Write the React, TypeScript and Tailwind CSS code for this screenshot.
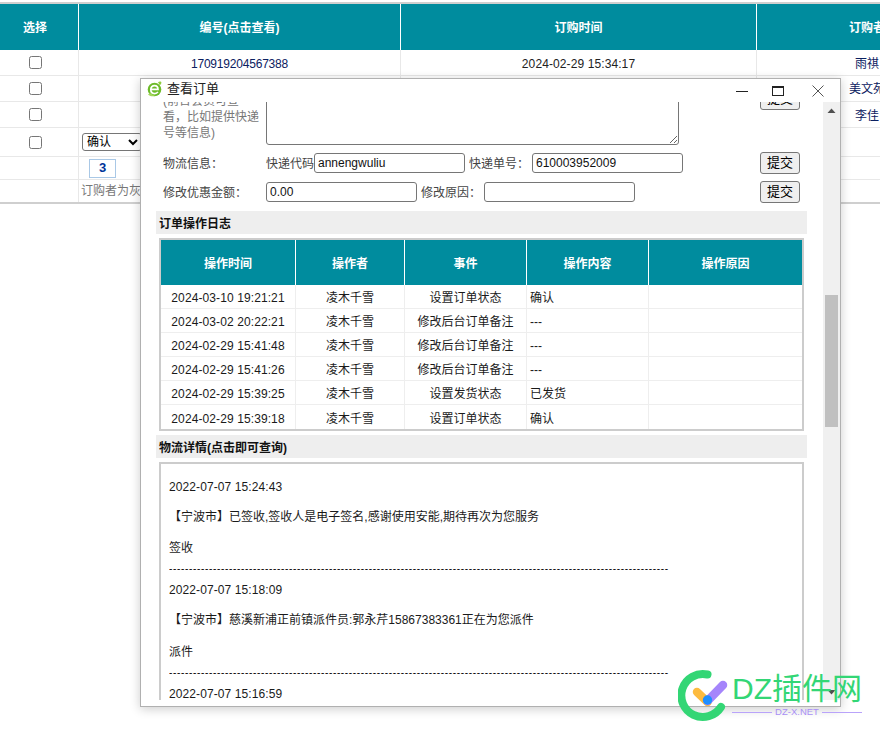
const logRows = [
  ["2024-03-10 19:21:21", "设置订单状态", "确认"],
  ["2024-03-02 20:22:21", "修改后台订单备注", "---"],
  ["2024-02-29 15:41:48", "修改后台订单备注", "---"],
  ["2024-02-29 15:41:26", "修改后台订单备注", "---"],
  ["2024-02-29 15:39:25", "设置发货状态", "已发货"],
  ["2024-02-29 15:39:18", "设置订单状态", "确认"],
];

const dashes = "-".repeat(125);

const trackLines = [
  ["2022-07-07 15:24:43", "mt-0", "tracking-[0.1px]"],
  ["【宁波市】已签收,签收人是电子签名,感谢使用安能,期待再次为您服务", "mt-[10px]", ""],
  ["签收", "mt-[11px]", ""],
  [dashes, "mt-px", "text-[10px] tracking-[0.667px] text-black"],
  ["2022-07-07 15:18:09", "mt-px", "tracking-[0.1px]"],
  ["【宁波市】慈溪新浦正前镇派件员:郭永芹15867383361正在为您派件", "mt-[10px]", ""],
  ["派件", "mt-3", ""],
  [dashes, "mt-px", "text-[10px] tracking-[0.667px] text-black"],
  ["2022-07-07 15:16:59", "mt-px", "tracking-[0.1px]"],
];

function Btn() {
  return (
    <button className="h-[22px] w-10 shrink-0 rounded-[3px] border border-[#767676] bg-[#efefef] text-[13px] leading-5 text-black">
      提交
    </button>
  );
}

function Field({ value, w = "w-[151px]" }: { value?: string; w?: string }) {
  return (
    <input
      readOnly
      value={value ?? ""}
      className={`${w} h-5 shrink-0 rounded-[3px] border border-[#767676] bg-white px-[3px] text-[12px] text-[#111]`}
    />
  );
}

function BgRow({ h, cols, sep = "border-b border-[#e8e8e8]" }: { h: string; cols: React.ReactNode[]; sep?: string }) {
  return (
    <div className={`grid grid-cols-[87px_322px_356px_221px] ${h} ${sep}`}>
      {cols.map((c, i) => (
        <div key={i} className="flex items-center justify-center border-r border-[#e8e8e8]">
          {c}
        </div>
      ))}
    </div>
  );
}

function SectionBar({ children }: { children: React.ReactNode }) {
  return (
    <div className="flex h-[23px] w-[651px] items-center bg-[#eeeeee] pl-[3px] pt-[2px] text-[12px] font-bold text-[#111]">
      {children}
    </div>
  );
}

export default function App() {
  return (
    <div className="relative h-[736px] w-[880px] overflow-hidden bg-white font-['Liberation_Sans','Noto_Sans_CJK_SC',sans-serif] text-[12px] text-[#222]">
      {/* background table */}
      <div className="-ml-2 w-[986px] pt-[2px]">
        <div className="border-t-2 border-[#d0d0d0]" />
        <div className="grid h-[46px] grid-cols-[87px_322px_356px_221px] bg-[#008c9e] font-bold text-white">
          {["选择", "编号(点击查看)", "订购时间", "订购者"].map((t) => (
            <div key={t} className="flex items-center justify-center border-r border-white pt-px">
              {t}
            </div>
          ))}
        </div>
        <BgRow
          h="h-[26px]"
          cols={[
            <input type="checkbox" />,
            <span className="mt-[2px] tracking-[-0.2px] text-[#0b2060]">170919204567388</span>,
            <span className="mt-[2px] tracking-[0.1px]">2024-02-29 15:34:17</span>,
            <span className="mt-[2px] text-[#0b2060]">雨祺</span>,
          ]}
        />
        <BgRow
          h="h-[26px]"
          cols={[<input type="checkbox" />, null, null, <span className="text-[#0b2060]">美文苑</span>]}
        />
        <BgRow
          h="h-[26px]"
          cols={[<input type="checkbox" />, null, null, <span className="mt-[2px] text-[#0b2060]">李佳</span>]}
        />
        <div className="grid h-[29px] grid-cols-[87px_899px] border-b border-[#e8e8e8]">
          <div className="flex items-center justify-center border-r border-[#e8e8e8]">
            <input type="checkbox" />
          </div>
          <div className="flex items-center pl-[3px]">
            <select className="h-[18px] w-[60px] rounded-[3px] border border-[#767676] bg-white text-[12px] text-black">
              <option>确认</option>
            </select>
          </div>
        </div>
        <div className="grid h-[23px] grid-cols-[87px_899px] border-b border-[#e8e8e8]">
          <div className="border-r border-[#e8e8e8]" />
          <div className="flex items-center pl-[10px]">
            <span className="flex h-[19px] w-[27px] items-center justify-center border border-[#a9c8e6] text-[13px] font-bold text-[#003399]">
              3
            </span>
          </div>
        </div>
        <div className="grid h-6 grid-cols-[87px_899px] border-b-2 border-[#cfcfcf]">
          <div className="border-r border-[#e8e8e8]" />
          <div className="flex items-center pl-[2px] text-[#777]">订购者为灰色表示未登录用户</div>
        </div>
      </div>

      {/* dialog */}
      <div className="absolute left-[140px] top-[78px] h-[629px] w-[701px] border border-[#b0b0b0] bg-white shadow-[0_2px_10px_rgba(0,0,0,0.2)]">
        <div className="flex h-[23px] items-center pl-[6px]">
          <div className="mb-1 flex items-center">
            <svg width="15" height="16" viewBox="0 0 15 16" className="shrink-0">
              <circle cx="7.5" cy="8.5" r="6.8" fill="#6dbb2a" />
              <path d="M1 13.5 C3 15.5 6 15.5 8 15 L3 12 Z" fill="#a4d85a" />
              <path d="M11 1.2 C12.5 0.2 14.2 0.4 14.4 1.4 C14.5 2.4 13.6 3.6 12.8 4.3 Z" fill="#8fce3f" />
              <path
                d="M3.8 8.4 H11 C11 5.9 9.5 4.6 7.5 4.6 C5.4 4.6 3.8 6.2 3.8 8.6 C3.8 11 5.4 12.6 7.6 12.6 C9 12.6 10.2 12 10.9 10.9"
                fill="none"
                stroke="#fff"
                strokeWidth="1.7"
              />
            </svg>
            <span className="ml-[5px] text-[13px] text-[#222]">查看订单</span>
          </div>
          <div className="ml-auto flex items-center">
            <svg width="14" height="14" viewBox="0 0 14 14" className="mr-[22px]">
              <path d="M1 7.5 H13" stroke="#222" strokeWidth="1" />
            </svg>
            <svg width="14" height="14" viewBox="0 0 14 14" className="mr-[26px]">
              <rect x="1.5" y="2.5" width="11" height="9" fill="none" stroke="#222" strokeWidth="1" />
              <path d="M1 3 H13" stroke="#222" strokeWidth="2" />
            </svg>
            <svg width="14" height="14" viewBox="0 0 14 14" className="mr-[15px]">
              <path d="M1.5 1.5 L12.5 12.5 M12.5 1.5 L1.5 12.5" stroke="#555" strokeWidth="1" />
            </svg>
          </div>
        </div>

        <div className="flex h-[598px]">
          {/* scrolled content */}
          <div className="h-full w-[682px] overflow-hidden pl-[15px]">
            <div className="-mt-[22px]">
              {/* remark row */}
              <div className="flex h-[65px] items-start pl-[7px]">
                <div className="w-[103px] pt-[13px] leading-4 text-[#777]">
                  <div>(前台会员可查</div>
                  <div>看，比如提供快递</div>
                  <div>号等信息)</div>
                </div>
                <textarea readOnly className="h-[65px] w-[413px] shrink-0 rounded-[3px] border border-[#767676] bg-white" />
                <div className="ml-[81px] mt-2">
                  <Btn />
                </div>
              </div>
              {/* logistics */}
              <div className="mt-[7px] flex h-[22px] items-center pl-[7px]">
                <span className="w-[103px] pt-[2px] text-[#444]">物流信息：</span>
                <span className="w-12 whitespace-nowrap pt-[2px] text-[#444]">快递代码</span>
                <Field value="annengwuliu" />
                <span className="ml-1 w-[63px] whitespace-nowrap pt-[2px] text-[#444]">快递单号：</span>
                <Field value="610003952009" />
                <div className="ml-[77px]">
                  <Btn />
                </div>
              </div>
              {/* discount */}
              <div className="mt-[7px] flex h-[22px] items-center pl-[7px]">
                <span className="w-[103px] pt-[2px] text-[#444]">修改优惠金额：</span>
                <Field value="0.00" />
                <span className="ml-1 w-[63px] whitespace-nowrap pt-[2px] text-[#444]">修改原因：</span>
                <Field />
                <div className="ml-[125px]">
                  <Btn />
                </div>
              </div>

              <div className="mt-2">
                <SectionBar>订单操作日志</SectionBar>
              </div>

              {/* log table */}
              <div className="ml-[3px] mt-1 w-[645px] border-2 border-[#cccccc]">
                <div className="grid h-[45px] grid-cols-[135px_109px_122px_122px_153px] bg-[#008c9e] font-bold text-white">
                  {["操作时间", "操作者", "事件", "操作内容", "操作原因"].map((t, i) => (
                    <div
                      key={t}
                      className={`flex items-center justify-center pt-[2px] ${i < 4 ? "border-r border-white" : ""}`}
                    >
                      {t}
                    </div>
                  ))}
                </div>
                {logRows.map((r, i) => (
                  <div
                    key={i}
                    className={`grid h-6 grid-cols-[135px_109px_122px_122px_153px] text-[#1a1a1a] ${
                      i < 5 ? "border-b border-[#eeeeee]" : ""
                    }`}
                  >
                    <div className="flex items-center justify-center border-r border-[#eeeeee] pt-[3px] tracking-[0.1px]">{r[0]}</div>
                    <div className="flex items-center justify-center border-r border-[#eeeeee] pt-[3px]">凌木千雪</div>
                    <div className="flex items-center justify-center border-r border-[#eeeeee] pt-[3px]">{r[1]}</div>
                    <div className="flex items-center border-r border-[#eeeeee] pl-[3px] pt-[3px]">{r[2]}</div>
                    <div />
                  </div>
                ))}
              </div>

              <div className="mt-1">
                <SectionBar>物流详情(点击即可查询)</SectionBar>
              </div>

              {/* tracking box */}
              <div className="ml-[3px] mt-1 h-[300px] w-[645px] border-2 border-b-0 border-[#cccccc] pl-2 pt-[13px]">
                {trackLines.map(([t, m, x], i) => (
                  <div key={i} className={`${m} ${x} h-5 overflow-hidden whitespace-nowrap leading-5 text-[#1a1a1a]`}>
                    {t}
                  </div>
                ))}
              </div>
            </div>
          </div>

          {/* scrollbar */}
          <div className="flex h-full w-[17px] shrink-0 flex-col bg-[#f0f0f0]">
            <div className="flex h-[17px] items-center justify-center">
              <svg width="9" height="6" viewBox="0 0 9 6">
                <path d="M4.5 0.5 L8.5 5 H0.5 Z" fill="#505050" />
              </svg>
            </div>
            <div className="ml-[2px] mt-[176px] h-[132px] w-[13px] bg-[#c0c0c0]" />
            <div className="mt-auto flex h-[17px] items-center justify-center">
              <svg width="9" height="6" viewBox="0 0 9 6">
                <path d="M4.5 5.5 L8.5 1 H0.5 Z" fill="#505050" />
              </svg>
            </div>
          </div>
        </div>
      </div>

      {/* watermark */}
      <div className="absolute left-[678px] top-[669px] flex items-start">
        <svg width="52" height="54" viewBox="0 0 52 54" className="shrink-0">
          <path
            d="M29.5 5.5 A 21.5 21.5 0 1 0 43 38"
            fill="none"
            stroke="#33d675"
            strokeWidth="8"
            strokeLinecap="round"
          />
          <path d="M19 23 L29.5 33" stroke="#fdbb3f" strokeWidth="8.5" strokeLinecap="round" />
          <path d="M29.5 32 L45 16" stroke="#a585fb" strokeWidth="8.5" strokeLinecap="round" />
          <circle cx="29.5" cy="31" r="4.7" fill="#1f8fff" />
        </svg>
        <div className="ml-[2px] flex w-[130px] flex-col pt-[2px]">
          <div className="h-[34px] whitespace-nowrap text-[30px] leading-[36px] text-[#33d675]">DZ插件网</div>
          <div className="mt-px flex items-center gap-[3px] text-[9.5px] leading-3 text-[#a88ff5]">
            <span className="h-px flex-1 bg-[#b9a3fa]" />
            <span>DZ-X.NET</span>
            <span className="h-px flex-1 bg-[#b9a3fa]" />
          </div>
        </div>
      </div>
    </div>
  );
}
